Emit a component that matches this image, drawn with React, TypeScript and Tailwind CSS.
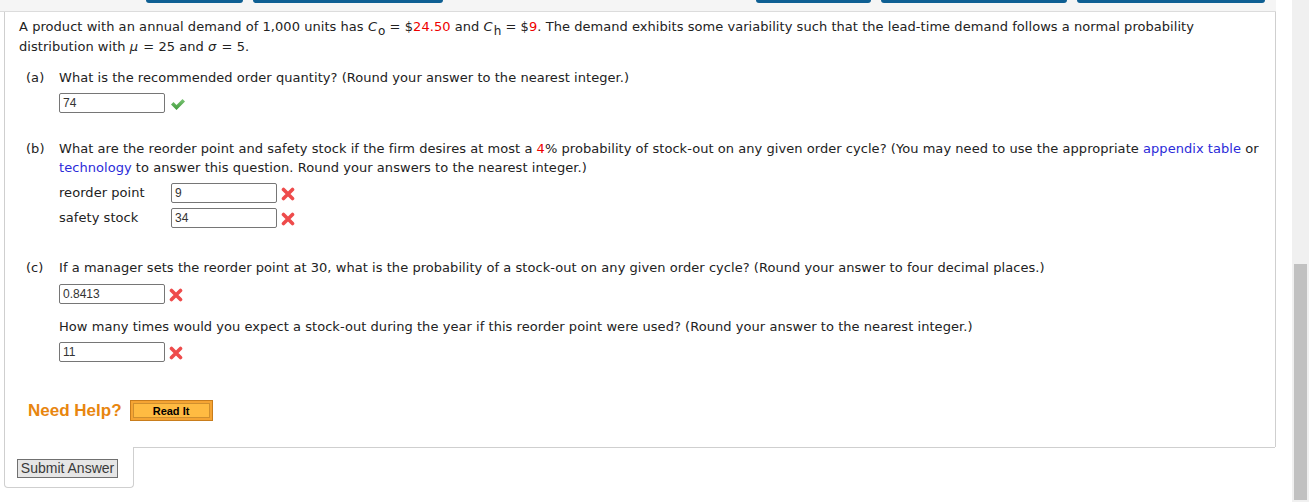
import React from 'react';

const Check = () => (
  <svg width="16" height="14" viewBox="0 0 16 14" className="ml-[5px] mt-[4px]">
    <defs>
      <linearGradient id="chk" x1="0" y1="0" x2="0" y2="1">
        <stop offset="0" stopColor="#7cc576" />
        <stop offset="1" stopColor="#3f9a3a" />
      </linearGradient>
    </defs>
    <path d="M1 7.5 L3.5 5 L6.5 8 L12.5 2 L15 4.5 L6.5 13 Z" fill="url(#chk)" />
  </svg>
);

const Cross = () => (
  <svg width="14" height="14" viewBox="0 0 14 14" className="ml-[4px] mt-[4px]">
    <path d="M2.5 2.5 L11.5 11.5 M11.5 2.5 L2.5 11.5" stroke="#ee4b4b" strokeWidth="3.6" strokeLinecap="round" />
  </svg>
);

const Answer = ({ value, mark }: { value: string; mark: 'ok' | 'bad' }) => (
  <div className="flex items-start">
    <div className="w-[106px] h-[20px] border border-[#767676] rounded-[2px] bg-white pl-[3px] text-[12px] leading-[18px] text-[#333] tracking-normal font-['Liberation_Sans',Arial,sans-serif]">
      {value}
    </div>
    {mark === 'ok' ? <Check /> : <Cross />}
  </div>
);

// variable with subscript, e.g. C with o
const Sub = ({ c }: { c: string }) => (
  <>
    <i className="inline-block pr-[1px]">C</i>
    <span className="inline-block text-[12px] leading-none relative top-[4px]">{c}</span>
  </>
);

export default function App() {
  return (
    <div className="flex w-[1309px] h-[502px] bg-white overflow-hidden font-['DejaVu_Sans',Verdana,sans-serif] text-[13px] text-[#222] tracking-[0.05px]">
      <div className="w-[1292px] shrink-0">
        {/* scrolled-away toolbar */}
        <div className="w-[1276px] h-[12px] bg-[#f5f5f5] border-b border-[#dcdcdc] relative">
          <div className="absolute top-0 left-[146px] w-[97px] h-[3px] bg-[#0e5f93] rounded-b-[3px]" />
          <div className="absolute top-0 left-[253px] w-[190px] h-[3px] bg-[#0e5f93] rounded-b-[3px]" />
          <div className="absolute top-0 left-[756px] w-[115px] h-[3px] bg-[#0e5f93] rounded-b-[3px]" />
          <div className="absolute top-0 left-[881px] w-[186px] h-[3px] bg-[#0e5f93] rounded-b-[3px]" />
          <div className="absolute top-0 left-[1077px] w-[188px] h-[3px] bg-[#0e5f93] rounded-b-[3px]" />
        </div>

        <div className="ml-[4px] w-[1272px] h-[435px] border-x border-[#cfcfcf] pl-[14px] pr-[14px] pt-[5px] leading-[20px]">
          <p>
            A product with an annual demand of 1,000 units has <Sub c="o" /> = $<span className="text-[#e00]">24.50</span> and{' '}
            <Sub c="h" /> = $<span className="text-[#e00]">9</span>. The demand exhibits some variability such that the lead-time demand follows a normal probability distribution with{' '}
            <i className="inline-block pr-[1px]">μ</i> = 25 and <i className="inline-block pr-[1px]">σ</i> = 5.
          </p>

          {/* (a) */}
          <div className="flex mt-[11px] ml-[7px]">
            <span className="w-[33px] shrink-0">(a)</span>
            <div>
              <p>What is the recommended order quantity? (Round your answer to the nearest integer.)</p>
              <div className="mt-[5px]">
                <Answer value="74" mark="ok" />
              </div>
            </div>
          </div>

          {/* (b) */}
          <div className="flex mt-[26px] ml-[7px]">
            <span className="w-[33px] shrink-0">(b)</span>
            <div>
              <p className="leading-[19px]">
                What are the reorder point and safety stock if the firm desires at most a <span className="text-[#e00]">4</span>% probability of stock-out on any given order cycle? (You may need to use the appropriate{' '}
                <span className="text-[#2b2bd9]">appendix table</span> or <span className="text-[#2b2bd9]">technology</span> to answer this question. Round your answers to the nearest integer.)
              </p>
              <div className="mt-[6px] flex flex-col gap-[5px]">
                <div className="flex items-start">
                  <span className="w-[112px] leading-[20px]">reorder point</span>
                  <Answer value="9" mark="bad" />
                </div>
                <div className="flex items-start">
                  <span className="w-[112px] leading-[20px]">safety stock</span>
                  <Answer value="34" mark="bad" />
                </div>
              </div>
            </div>
          </div>

          {/* (c) */}
          <div className="flex mt-[30px] ml-[7px]">
            <span className="w-[33px] shrink-0">(c)</span>
            <div>
              <p>If a manager sets the reorder point at 30, what is the probability of a stock-out on any given order cycle? (Round your answer to four decimal places.)</p>
              <div className="mt-[6px]">
                <Answer value="0.8413" mark="bad" />
              </div>
              <p className="mt-[13px]">How many times would you expect a stock-out during the year if this reorder point were used? (Round your answer to the nearest integer.)</p>
              <div className="mt-[5px]">
                <Answer value="11" mark="bad" />
              </div>
            </div>
          </div>

          {/* help */}
          <div className="flex items-center mt-[38px] ml-[9px] tracking-normal font-['Liberation_Sans',Arial,sans-serif]">
            <span className="text-[17px] font-bold text-[#e8860f]">Need Help?</span>
            <button className="ml-[8px] w-[83px] h-[21px] border border-[#c97d1c] bg-[#f5a433] p-[2px]">
              <span className="flex items-center justify-center w-full h-full bg-[#ffbb42] border border-[#d08f2e] text-[11px] font-bold text-black">
                Read It
              </span>
            </button>
          </div>
        </div>

        {/* submit tab */}
        <div className="flex">
          <div className="ml-[4px] w-[130px] h-[41px] border-x border-b border-[#cfcfcf] rounded-b-[4px] pl-[12px] pt-[12px]">
            <button className="w-[101px] h-[19px] border border-[#707070] bg-[#e6e6e6] text-[14px] leading-[17px] text-[#3a3a3a] tracking-normal font-['Liberation_Sans',Arial,sans-serif]">
              Submit Answer
            </button>
          </div>
          <div className="w-[1142px] h-[1px] bg-[#cfcfcf] -ml-[1px]" />
        </div>
      </div>

      {/* scrollbar */}
      <div className="w-[17px] h-full bg-[#f0f0f0] pt-[264px] flex justify-center">
        <div className="w-[13px] h-[236px] bg-[#c1c1c1]" />
      </div>
    </div>
  );
}
